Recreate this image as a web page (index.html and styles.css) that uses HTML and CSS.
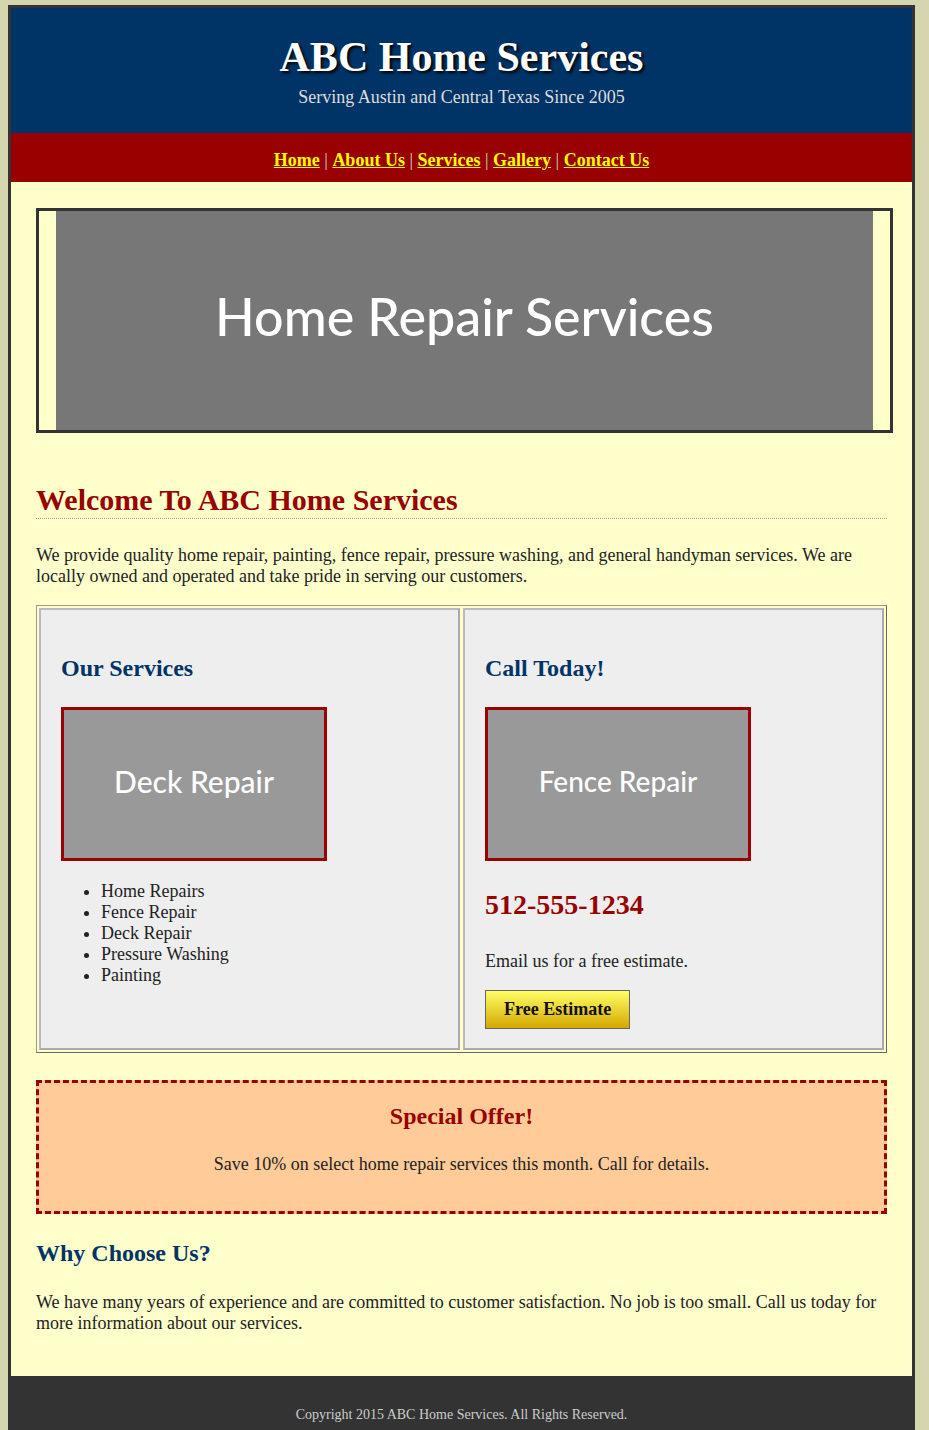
FILE: index.html
```html
<!DOCTYPE html>
<html lang="en">
<head>
<meta charset="utf-8">
<title>ABC Home Services</title>
<link rel="stylesheet" href="styles.css">
</head>
<body>
<div class="page">
  <header class="header">
    <h1 class="site-title">ABC Home Services</h1>
    <p class="tagline">Serving Austin and Central Texas Since 2005</p>
  </header>
  <nav class="nav">
    <a href="#">Home</a><span class="sep"> | </span><a href="#">About Us</a><span class="sep"> | </span><a href="#">Services</a><span class="sep"> | </span><a href="#">Gallery</a><span class="sep"> | </span><a href="#">Contact Us</a>
  </nav>
  <main class="content">
    <div class="banner">
      <div class="banner-img">Home Repair Services</div>
    </div>
    <h2 class="welcome">Welcome To ABC Home Services</h2>
    <p class="text">We provide quality home repair, painting, fence repair, pressure washing, and general handyman services. We are locally owned and operated and take pride in serving our customers.</p>
    <div class="columns">
      <div class="cell">
        <h3 class="cell-title">Our Services</h3>
        <div class="thumb">Deck Repair</div>
        <ul class="service-list">
          <li>Home Repairs</li>
          <li>Fence Repair</li>
          <li>Deck Repair</li>
          <li>Pressure Washing</li>
          <li>Painting</li>
        </ul>
      </div>
      <div class="cell">
        <h3 class="cell-title">Call Today!</h3>
        <div class="thumb thumb-small">Fence Repair</div>
        <p class="phone">512-555-1234</p>
        <p class="email">Email us for a free estimate.</p>
        <button class="btn" type="button">Free Estimate</button>
      </div>
    </div>
    <div class="offer">
      <h3 class="offer-title">Special Offer!</h3>
      <p class="offer-text">Save 10% on select home repair services this month. Call for details.</p>
    </div>
    <h3 class="why">Why Choose Us?</h3>
    <p class="text last">We have many years of experience and are committed to customer satisfaction. No job is too small. Call us today for more information about our services.</p>
  </main>
  <footer class="footer">
    <p>Copyright 2015 ABC Home Services. All Rights Reserved.</p>
  </footer>
</div>
</body>
</html>
```
FILE: styles.css
```css
html, body {
  margin: 0;
  padding: 0;
}
body {
  background: #d5d5b0;
  font-family: "Liberation Serif", "Times New Roman", serif;
  font-size: 18px;
  color: #222;
  padding: 5px 0 0 8px;
}
.page {
  width: 901px;
  border: 3px solid #333;
  background: #ffffcc;
}
.header {
  background: #003366;
  color: #fff;
  text-align: center;
  padding: 25px 0 26px;
}
.site-title {
  margin: 0 0 6px;
  font-size: 42px;
  line-height: 48px;
  font-weight: bold;
  text-shadow: 2px 2px 3px #000;
}
.tagline {
  margin: 0;
  font-size: 18px;
  line-height: 20px;
  color: #dddddd;
}
.nav {
  background: #990000;
  text-align: center;
  padding: 18px 0 12px;
  font-size: 18px;
  line-height: 19px;
}
.nav a {
  color: #ffff00;
  font-weight: bold;
  text-decoration: underline;
}
.nav .sep {
  color: #cccccc;
}
.content {
  padding: 26px 25px 25px;
}
.banner {
  width: 100%;
  border: 3px solid #333;
  display: flex;
  justify-content: center;
}
.banner-img {
  width: 817px;
  height: 210px;
  padding-bottom: 9px;
  background: #777777;
  color: #fff;
  font-family: Lato, "Open Sans", sans-serif;
  font-weight: 500;
  font-size: 52px;
  display: flex;
  align-items: center;
  justify-content: center;
}
.welcome {
  margin: 50px 0 0;
  color: #990000;
  font-size: 30px;
  line-height: 34px;
  padding-bottom: 1px;
  border-bottom: 1px dotted #999;
}
.text {
  margin: 26px 0 0;
  font-size: 18px;
  line-height: 21px;
}
.columns {
  margin-top: 18px;
  border: 1px solid #999;
  border-right-color: #666;
  border-bottom-color: #666;
  padding: 2px;
  display: grid;
  grid-template-columns: 1fr 1fr;
  gap: 3px;
}
.cell {
  background: #eeeeee;
  border: 2px solid #aaa;
  border-top-color: #bbb;
  border-left-color: #bbb;
  padding: 20px 20px 19px;
}
.cell-title {
  margin: 24px 0 25px;
  color: #003366;
  font-size: 24px;
  line-height: 28px;
}
.thumb {
  width: 260px;
  height: 142px;
  padding-bottom: 6px;
  border: 3px solid #990000;
  background: #999999;
  color: #fff;
  font-family: Lato, "Open Sans", sans-serif;
  font-weight: 500;
  font-size: 30px;
  display: flex;
  align-items: center;
  justify-content: center;
}
.thumb-small {
  font-size: 28px;
}
.service-list {
  margin: 20px 0 0;
  padding-left: 40px;
  font-size: 18px;
  line-height: 21px;
}
.phone {
  margin: 28px 0 0;
  color: #990000;
  font-size: 28px;
  line-height: 32px;
  font-weight: bold;
}
.email {
  margin: 30px 0 0;
  font-size: 18px;
  line-height: 21px;
}
.btn {
  margin-top: 18px;
  display: block;
  font-family: "Liberation Serif", "Times New Roman", serif;
  font-weight: bold;
  font-size: 18px;
  line-height: 21px;
  color: #111;
  padding: 8px 18px;
  border: 1px solid #666;
  background: linear-gradient(to bottom, #ffff66, #d4a800);
  cursor: pointer;
}
.offer {
  margin-top: 27px;
  border: 3px dashed #990000;
  background: #ffcc99;
  text-align: center;
  padding: 19px 20px 20px;
}
.offer-title {
  margin: 0 0 24px;
  color: #990000;
  font-size: 24px;
  line-height: 28px;
}
.offer-text {
  margin: 0 0 16px;
  font-size: 18px;
  line-height: 21px;
}
.why {
  margin: 25px 0 0;
  color: #003366;
  font-size: 24px;
  line-height: 28px;
}
.text.last {
  margin: 25px 0 17px;
}
.footer {
  background: #333333;
  color: #cccccc;
  text-align: center;
  padding: 31px 0 40px;
}
.footer p {
  margin: 0;
  font-size: 14px;
  line-height: 16px;
}
```
